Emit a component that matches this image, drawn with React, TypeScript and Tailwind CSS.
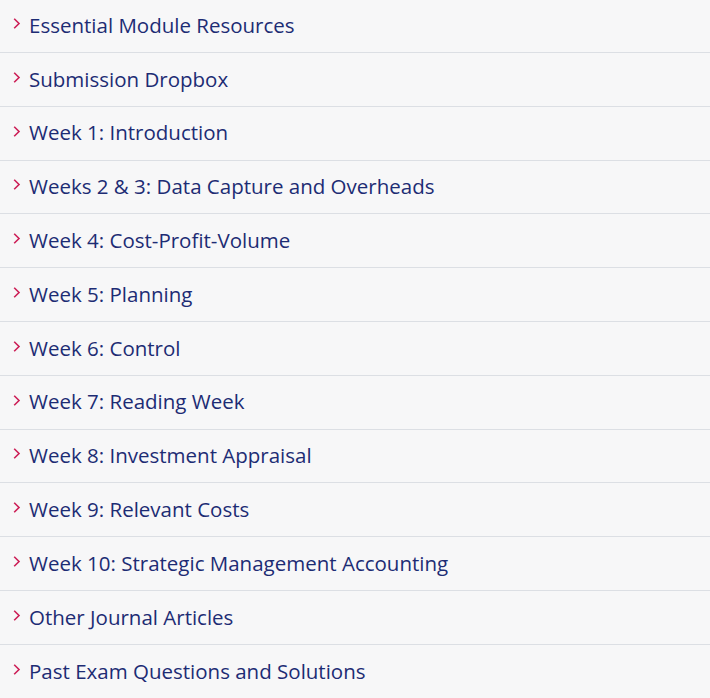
import React from "react";

const items = [
  "Essential Module Resources",
  "Submission Dropbox",
  "Week 1: Introduction",
  "Weeks 2 & 3: Data Capture and Overheads",
  "Week 4: Cost-Profit-Volume",
  "Week 5: Planning",
  "Week 6: Control",
  "Week 7: Reading Week",
  "Week 8: Investment Appraisal",
  "Week 9: Relevant Costs",
  "Week 10: Strategic Management Accounting",
  "Other Journal Articles",
  "Past Exam Questions and Solutions",
];

export default function App() {
  return (
    <div className="w-[710px] h-[698px] bg-[#f7f7f8] overflow-hidden" style={{ fontFamily: "'Open Sans', sans-serif" }}>
      <div className="-mt-[0.8px]">
        {items.map((t, i) => (
          <div
            key={i}
            className={`flex items-center h-[53.8px] pl-[13px] ${i < items.length - 1 ? "border-b border-[#dcdfe4]" : ""}`}
          >
            <svg width="8" height="11" viewBox="0 0 8 11" className="mr-[8px] mb-[4px]">
              <path d="M1.2 0.8 L6 5.5 L1.2 10.2" fill="none" stroke="#cc1f57" strokeWidth="1.6" />
            </svg>
            <span className="text-[20.5px] text-[#1d2c74] leading-none mb-[1px]">{t}</span>
          </div>
        ))}
      </div>
    </div>
  );
}
